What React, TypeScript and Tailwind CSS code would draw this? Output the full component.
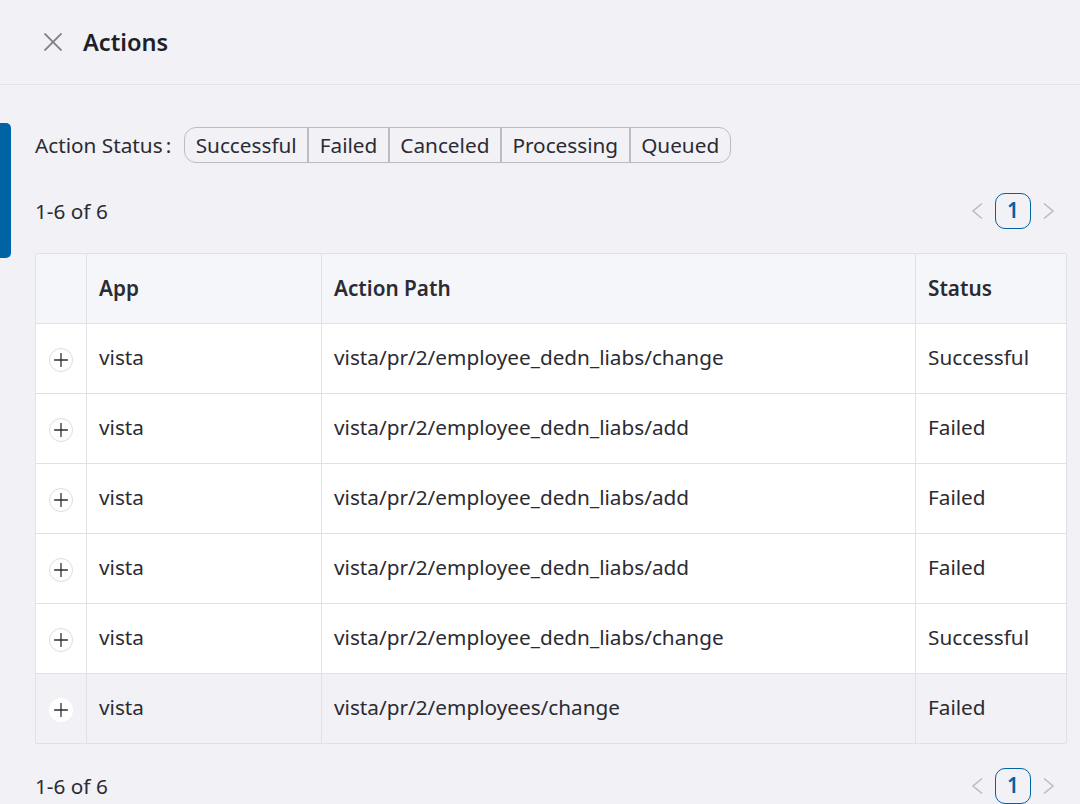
import { Plus } from "lucide-react";

const statusOptions = ["Successful", "Failed", "Canceled", "Processing", "Queued"];

const rows = [
  { path: "vista/pr/2/employee_dedn_liabs/change", status: "Successful" },
  { path: "vista/pr/2/employee_dedn_liabs/add", status: "Failed" },
  { path: "vista/pr/2/employee_dedn_liabs/add", status: "Failed" },
  { path: "vista/pr/2/employee_dedn_liabs/add", status: "Failed" },
  { path: "vista/pr/2/employee_dedn_liabs/change", status: "Successful" },
  { path: "vista/pr/2/employees/change", status: "Failed", hovered: true },
];

const Chevron = ({ points }: { points: string }) => (
  <svg viewBox="0 0 12 18" className="w-3 h-[18px] text-[#bcbcc2]" fill="none" stroke="currentColor" strokeWidth={1.6}>
    <polyline points={points} />
  </svg>
);

const Pagination = () => (
  <div className="flex items-center justify-between h-9">
    <span className="pt-[1px]">1-6 of 6</span>
    <div className="flex items-center gap-3 pr-3">
      <Chevron points="11,1.5 2,9 11,16.5" />
      <div className="w-9 h-9 flex items-center justify-center rounded-[10px] border border-[#0063a3] text-[#0063a3] font-semibold">
        1
      </div>
      <Chevron points="1,1.5 10,9 1,16.5" />
    </div>
  </div>
);

export default function App() {
  return (
    <div className="relative h-[804px] overflow-hidden bg-[#f1f1f6] text-[#2b2b33] text-[20.75px] font-['Noto_Sans',sans-serif]">
      {/* Header */}
      <div className="flex items-center h-[85px] pl-[44px] gap-[21px] border-b border-[#e2e2e8]">
        <svg viewBox="0 0 18 18" className="w-[18px] h-[18px] text-[#808088]" fill="none" stroke="currentColor" strokeWidth={1.9}>
          <path d="M0.5 0.5L17.5 17.5M17.5 0.5L0.5 17.5" />
        </svg>
        <h1 className="pt-[1px] text-[23.6px] font-semibold text-[#1f1f27]">Actions</h1>
      </div>

      {/* Side tab */}
      <div className="absolute left-0 top-[123px] w-[11px] h-[135px] bg-[#0063a3] rounded-r-[5px]" />

      <div className="pl-[35px] pr-[13px]">
        {/* Status filter */}
        <div className="flex items-center mt-[42px] h-9">
          <span className="pt-[1px]">Action Status</span>
          <span className="ml-[3px] pt-[1px]">:</span>
          <div className="flex ml-[13px] h-9 border border-[#bcbcc4] rounded-[12px] overflow-hidden">
            {statusOptions.map((option, i) => (
              <div
                key={option}
                className={`flex items-center pt-[1px] px-[10.5px] ${i > 0 ? "border-l-2 border-[#bcbcc4]" : ""}`}
              >
                {option}
              </div>
            ))}
          </div>
        </div>

        <div className="mt-[30px]">
          <Pagination />
        </div>

        {/* Table */}
        <div className="mt-6 mb-6 grid grid-cols-[51px_235px_594px_1fr] border border-[#e0e0e6] rounded-[2px]">
          <div className="h-[70px] bg-[#f4f6f9] border-r border-b border-[#e0e0e6]" />
          <div className="h-[70px] flex items-center pl-3 bg-[#f4f6f9] border-r border-b border-[#e0e0e6] font-semibold">App</div>
          <div className="h-[70px] flex items-center pl-3 bg-[#f4f6f9] border-r border-b border-[#e0e0e6] font-semibold">Action Path</div>
          <div className="h-[70px] flex items-center pl-3 bg-[#f4f6f9] border-b border-[#e0e0e6] font-semibold">Status</div>

          {rows.map((row, i) => {
            const last = i === rows.length - 1;
            const bg = row.hovered ? "" : "bg-white";
            const cell = last ? "h-[69px]" : "h-[70px] border-b";
            return (
              <div key={i} className="contents">
                <div className={`flex items-center justify-center pt-[2px] border-r border-[#e0e0e6] ${cell} ${bg}`}>
                  <div className={`w-6 h-6 flex items-center justify-center rounded-full bg-white ${row.hovered ? "" : "border border-[#dcdce2]"}`}>
                    <Plus className="w-[22px] h-[22px] shrink-0 text-[#2b2b33]" strokeWidth={1.4} />
                  </div>
                </div>
                <div className={`flex items-center pl-3 pb-[1px] border-r border-[#e0e0e6] ${cell} ${bg}`}>vista</div>
                <div className={`flex items-center pl-3 pb-[1px] border-r border-[#e0e0e6] ${cell} ${bg}`}>{row.path}</div>
                <div className={`flex items-center pl-3 pb-[1px] border-[#e0e0e6] ${cell} ${bg}`}>{row.status}</div>
              </div>
            );
          })}
        </div>

        <Pagination />
      </div>
    </div>
  );
}
